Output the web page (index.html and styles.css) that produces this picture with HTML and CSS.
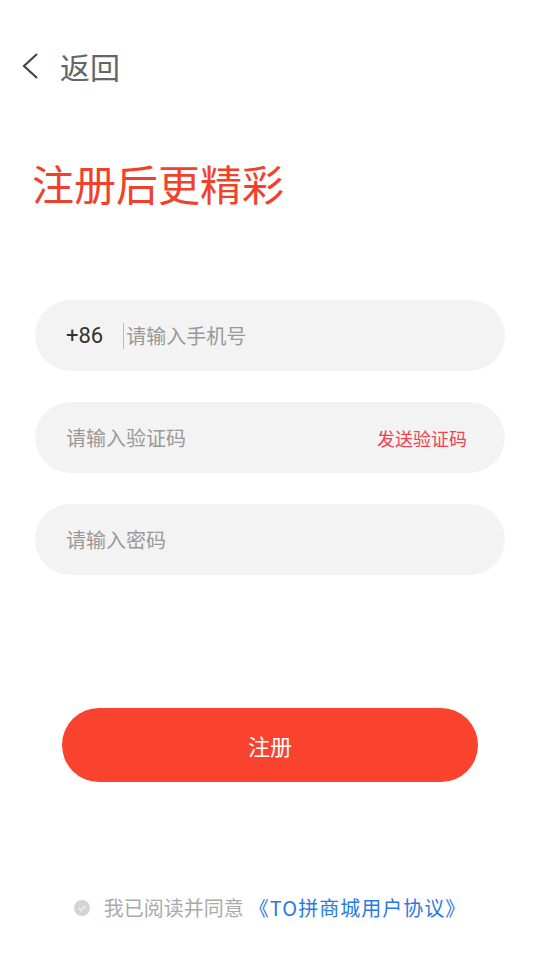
FILE: index.html
```html
<!DOCTYPE html>
<html lang="zh-CN">
<head>
    <meta charset="UTF-8">
    <meta name="viewport" content="width=device-width, initial-scale=1.0">
    <title>注册</title>
    <link rel="stylesheet" href="styles.css">
</head>
<body>
    <div class="page">
        <div class="nav">
            <svg class="back-icon" width="18" height="28" viewBox="0 0 18 28">
                <polyline points="16,2 3,14 16,26" fill="none" stroke="#444" stroke-width="2.2"/>
            </svg>
            <span class="back-text">返回</span>
        </div>

        <h1 class="title">注册后更精彩</h1>

        <div class="form">
            <div class="field field-phone">
                <span class="prefix">+86</span>
                <span class="cursor"></span>
                <span class="placeholder">请输入手机号</span>
            </div>
            <div class="field field-code">
                <span class="placeholder">请输入验证码</span>
                <span class="send-code">发送验证码</span>
            </div>
            <div class="field field-pwd">
                <span class="placeholder">请输入密码</span>
            </div>
        </div>

        <button class="submit">注册</button>

        <div class="agree">
            <svg class="check" width="16" height="16" viewBox="0 0 16 16">
                <circle cx="8" cy="8" r="8" fill="#d4d4d4"/>
                <polyline points="4.5,8.2 7,10.6 11.5,5.8" fill="none" stroke="#ececec" stroke-width="1.6"/>
            </svg>
            <span class="agree-text">我已阅读并同意</span>
            <span class="agree-link">《TO拼商城用户协议》</span>
        </div>
    </div>
</body>
</html>
```

FILE: styles.css
```css
body {
    margin: 0;
    background: #fff;
    font-family: "Noto Sans CJK SC", "Noto Sans", sans-serif;
}
.page {
    width: 540px;
    height: 960px;
    display: flex;
    flex-direction: column;
}
.nav {
    display: flex;
    align-items: center;
    height: 40px;
    margin-top: 46px;
    padding-left: 21px;
}
.back-icon {
    display: block;
}
.back-text {
    margin-left: 21px;
    font-size: 30px;
    line-height: 40px;
    color: #666;
}
.title {
    margin: 67px 0 0 32px;
    font-size: 42px;
    line-height: 60px;
    font-weight: normal;
    color: #f2412b;
}
.form {
    margin: 87px 35px 0;
    display: flex;
    flex-direction: column;
    gap: 31px;
}
.field {
    height: 71px;
    border-radius: 36px;
    background: #f3f3f3;
    display: flex;
    align-items: center;
    padding: 0 38px 0 31px;
}
.prefix {
    font-size: 22px;
    color: #333;
    font-family: Roboto, "Noto Sans CJK SC", sans-serif;
}
.cursor {
    width: 1px;
    height: 26px;
    background: #bbb;
    margin: 0 2px 0 20px;
}
.placeholder {
    font-size: 20px;
    color: #999;
}
.send-code {
    margin-left: auto;
    font-size: 18px;
    color: #ee4352;
}
.submit {
    margin: 133px 62px 0;
    height: 74px;
    border: none;
    border-radius: 37px;
    background: #f9432f;
    color: #fff;
    font-size: 22px;
    font-family: inherit;
    padding: 0;
}
.agree {
    margin-top: 111px;
    display: flex;
    align-items: center;
    justify-content: center;
    font-size: 20px;
}
.check {
    margin-right: 14px;
}
.agree-text {
    color: #aaa;
}
.agree-link {
    margin-left: 5px;
    letter-spacing: 1px;
    color: #2b7ae4;
}
```
